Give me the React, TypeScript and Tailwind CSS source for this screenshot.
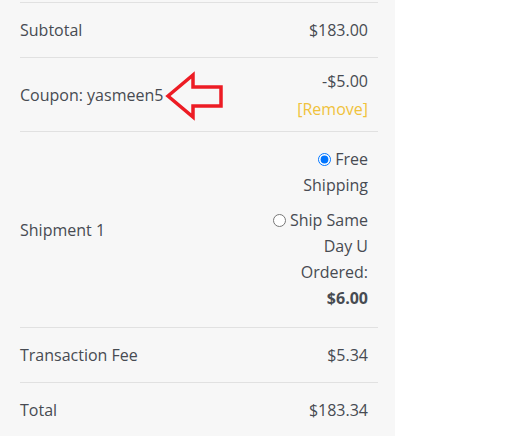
import React from 'react';

const rows = [
  { label: 'Subtotal', value: '$183.00', h: 'h-[55px]' },
];

function Row({ label, children, h }: { label: React.ReactNode; children: React.ReactNode; h: string }) {
  return (
    <div className={`flex items-center justify-between border-t border-[#e1e1e1] pr-[10px] ${h}`}>
      <div className="relative">{label}</div>
      <div className="w-[104px] text-right">{children}</div>
    </div>
  );
}

export default function App() {
  return (
    <div className="h-[436px] w-[520px] bg-white" style={{ fontFamily: '"Open Sans", sans-serif' }}>
      <div className="relative h-full w-[395px] bg-[#f7f7f7] pl-[20px] pr-[17px] pt-[2px] text-[16px] leading-[26px] text-[#474b52]">
        {rows.map((r) => (
          <Row key={r.label} label={r.label} h={r.h}>
            {r.value}
          </Row>
        ))}
        <Row label="Coupon: yasmeen5" h="h-[74px]">
          <div className="pt-[1px]">-$5.00</div>
          <div className="mt-[2px] text-[#f0c23b]">[Remove]</div>
        </Row>
        <Row label="Shipment 1" h="h-[196px]">
          <div className="-mt-[2px]">
            <label>
              <input type="radio" name="ship" defaultChecked className="mr-[4px] align-[-1px]" />
              Free Shipping
            </label>
          </div>
          <div className="mt-[9px]">
            <label>
              <input type="radio" name="ship" className="mr-[4px] align-[-1px]" />
              Ship Same Day U Ordered: <b className="font-bold">$6.00</b>
            </label>
          </div>
        </Row>
        <Row label="Transaction Fee" h="h-[55px]">
          $5.34
        </Row>
        <Row label="Total" h="h-[55px]">
          $183.34
        </Row>

        {/* red annotation arrow */}
        <svg className="absolute left-0 top-0" width="240" height="130" viewBox="0 0 240 130">
          <polygon
            points="168,96 193,75 193,87 221,87 221,106 193,106 193,117"
            fill="none"
            stroke="#ed1c24"
            strokeWidth="3.5"
            strokeLinejoin="miter"
          />
        </svg>
      </div>
    </div>
  );
}
